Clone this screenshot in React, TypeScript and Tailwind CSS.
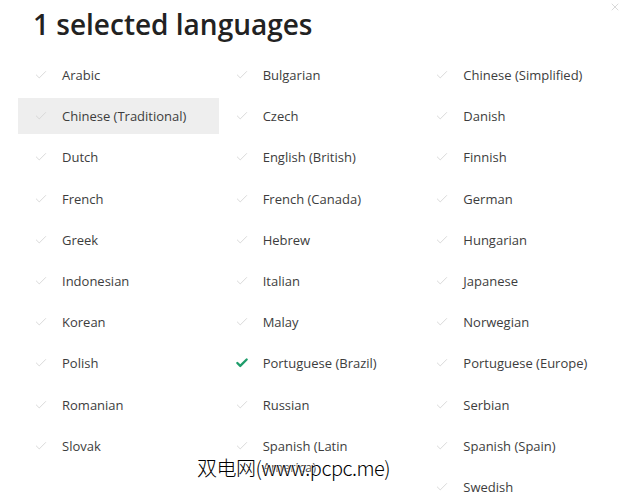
import { Check, X } from "lucide-react";

const languages = [
  "Arabic",
  "Bulgarian",
  "Chinese (Simplified)",
  "Chinese (Traditional)",
  "Czech",
  "Danish",
  "Dutch",
  "English (British)",
  "Finnish",
  "French",
  "French (Canada)",
  "German",
  "Greek",
  "Hebrew",
  "Hungarian",
  "Indonesian",
  "Italian",
  "Japanese",
  "Korean",
  "Malay",
  "Norwegian",
  "Polish",
  "Portuguese (Brazil)",
  "Portuguese (Europe)",
  "Romanian",
  "Russian",
  "Serbian",
  "Slovak",
  "Spanish (Latin America)",
  "Spanish (Spain)",
  "Swedish"
];

const selected = "Portuguese (Brazil)";
const hovered = "Chinese (Traditional)";

function LanguageItem({ name }: { name: string }) {
  const isSelected = name === selected;
  const placement = name === "Swedish" ? "col-start-3" : "";

  return (
    <div
      className={`flex h-[36px] items-start gap-[14px] pl-[16px] pr-[20px] pt-[8px] ${
        name === hovered ? "bg-[#eeeeee]" : ""
      } ${placement}`}
    >
      <Check
        aria-hidden="true"
        className={
          isSelected
            ? "mt-[3px] h-[14px] w-[14px] shrink-0 text-[#1f9d6b]"
            : "mt-[3px] h-[14px] w-[14px] shrink-0 text-[#d4d4d4]"
        }
        strokeWidth={isSelected ? 4 : 1.5}
      />
      <span className="text-[13px] leading-[21px] text-[#3d3d3d]">{name}</span>
    </div>
  );
}

export default function App() {
  return (
    <div className="relative h-[500px] w-[640px] overflow-hidden bg-white font-['Open_Sans',sans-serif]">
      <button
        className="absolute right-[19px] top-[1px] text-[#cccccc]"
        type="button"
      >
        <X aria-hidden="true" className="h-[12px] w-[12px]" strokeWidth={1.5} />
      </button>

      <h1 className="pl-[33px] pt-[5px] text-[28px] font-semibold leading-[38px] text-[#222222]">
        1 selected languages
      </h1>

      <div className="mt-[14px] grid w-[620px] grid-cols-3 gap-y-[5.2px] pl-[18px]">
        {languages.map((name) => (
          <LanguageItem key={name} name={name} />
        ))}
      </div>

      <p className="absolute left-[197px] top-[455px] font-['Noto_Sans_CJK_SC',sans-serif] text-[20px] font-light leading-[26px] tracking-[-0.5px] text-black [text-shadow:0_0_2px_#fff,0_0_2px_#fff,0_0_2px_#fff]">
        双电网(www.pcpc.me)
      </p>
    </div>
  );
}
